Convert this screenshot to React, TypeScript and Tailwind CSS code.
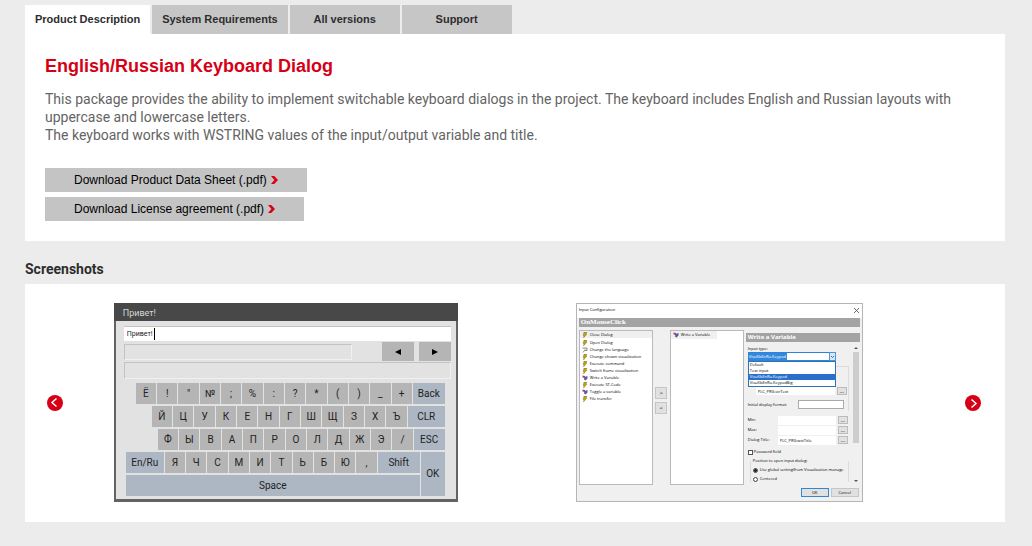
import { useState, type ReactNode } from "react";
import clsx from "clsx";

const TABS = ["Product Description", "System Requirements", "All versions", "Support"];

const DOWNLOADS = [
  "Download Product Data Sheet (.pdf)",
  "Download License agreement (.pdf)",
];

const ACTIONS: { label: string; icon: ActionKind }[] = [
  { label: "Close Dialog", icon: "bolt" },
  { label: "Open Dialog", icon: "bolt" },
  { label: "Change the language", icon: "flag" },
  { label: "Change shown visualization", icon: "bolt" },
  { label: "Execute command", icon: "bolt" },
  { label: "Switch frame visualization", icon: "bolt" },
  { label: "Write a Variable", icon: "variable" },
  { label: "Execute ST-Code", icon: "bolt" },
  { label: "Toggle a variable", icon: "variable" },
  { label: "File transfer", icon: "bolt" },
];

const INPUT_TYPES = ["Default", "Text input", "VisuKbEnRu.Keypad", "VisuKbEnRu.KeypadBig"];

type ActionKind = "bolt" | "flag" | "variable";

function ActionIcon({ kind }: { kind: ActionKind }) {
  if (kind === "flag") {
    return (
      <svg className="h-[6px] w-[6px] shrink-0" viewBox="0 0 12 12" fill="none">
        <path d="M1 2h9v5H5L2 11" stroke="#666" strokeWidth="1.5" />
        <path d="M4 4.5h4" stroke="#999" />
      </svg>
    );
  }
  if (kind === "variable") {
    return (
      <svg className="h-[6px] w-[6px] shrink-0" viewBox="0 0 12 12">
        <path d="M1 1l5 1v4L1 5z" fill="#c23a4a" />
        <path d="M5 4l6-2v5l-4 4-3-2z" fill="#4a5fa8" />
      </svg>
    );
  }
  return (
    <svg className="h-[6px] w-[6px] shrink-0" viewBox="0 0 12 12">
      <path d="M4 0h6L8 4h2L3 12l1-5H2z" fill="#b8a513" stroke="#5e5510" strokeWidth="0.6" />
    </svg>
  );
}

function RedChevron() {
  return (
    <svg className="h-2 w-[7px]" viewBox="0 0 7 8">
      <path d="M0 0h3.2L7 4 3.2 8H0l3.4-4z" fill="#d90012" />
    </svg>
  );
}

function SlideButton({ direction }: { direction: "prev" | "next" }) {
  return (
    <button
      type="button"
      aria-label={direction === "prev" ? "Previous" : "Next"}
      className="size-4 shrink-0 rounded-full"
    >
      <svg className={clsx("size-4", direction === "prev" && "rotate-180")} viewBox="0 0 16 16">
        <circle cx="8" cy="8" r="8" fill="#d60016" />
        <path d="M6.5 4.5L11 8.5l-4.5 4" fill="none" stroke="#fff" strokeWidth="1.5" />
      </svg>
    </button>
  );
}

function Key({ children, className }: { children: ReactNode; className?: string }) {
  return (
    <button
      type="button"
      className={clsx(
        "flex min-w-0 items-center justify-center text-[10px] leading-none text-[#222]",
        className ?? "flex-1 bg-[#b5b5b5]",
      )}
    >
      {children}
    </button>
  );
}

function Keys({ chars }: { chars: string }) {
  return (
    <>
      {chars.split(" ").map((c) => (
        <Key key={c}>{c}</Key>
      ))}
    </>
  );
}

function KeyboardDialog() {
  return (
    <div className="flex w-[344px] flex-col border-b-[3px] border-l-2 border-r-2 border-[#636363] bg-[#e2e2e2] font-['Roboto',sans-serif]">
      <div className="-mx-0.5 h-[18px] bg-[#484848] pl-[9px] text-[9px] leading-5 text-[#d5d5d5]">
        Привет!
      </div>
      <div className="pl-2 pr-[5px] pt-[5px]">
        <div className="flex h-[15px] items-center border-t border-[#c4c4bb] bg-white pl-[3px] text-[#222]">
          <input
            aria-label="Привет!"
            defaultValue="Привет!"
            className="h-3 w-7 border-r border-black bg-transparent p-0 text-[7px] leading-3"
          />
        </div>
        <div className="mt-px flex h-[19px] items-center gap-[5px]">
          <div className="h-4 w-[228px] border border-b-[#f0f0f0] border-l-[#c4c4bb] border-r-[#f0f0f0] border-t-[#c4c4bb]" />
          <button type="button" aria-label="Left" className="ml-auto flex h-full w-8 items-center justify-center bg-[#b5b5b5]">
            <svg className="h-1.5 w-1.5" viewBox="0 0 6 6"><path d="M6 0v6L0 3z" /></svg>
          </button>
          <button type="button" aria-label="Right" className="flex h-full w-8 items-center justify-center bg-[#b5b5b5]">
            <svg className="h-1.5 w-1.5" viewBox="0 0 6 6"><path d="M0 0v6l6-3z" /></svg>
          </button>
        </div>
        <div className="mt-px h-[17px] border border-b-[#f0f0f0] border-l-[#c4c4bb] border-r-[#f0f0f0] border-t-[#c4c4bb]" />
      </div>
      <div className="flex flex-col gap-0.5 pb-[3px] pl-2.5 pr-[11px] pt-1">
        <div className="flex h-[21px] gap-px pl-2.5">
          <Keys chars={'Ё ! " № ; % : ? * ( ) _ +'} />
          <Key className="w-8 bg-[#adb7c4]">Back</Key>
        </div>
        <div className="flex h-[21px] gap-px pl-[26px]">
          <Keys chars="Й Ц У К Е Н Г Ш Щ З Х Ъ" />
          <Key className="w-[37px] bg-[#adb7c4]">CLR</Key>
        </div>
        <div className="flex h-[21px] gap-px pl-8">
          <Keys chars="Ф Ы В А П Р О Л Д Ж Э /" />
          <Key className="w-[31px] bg-[#adb7c4]">ESC</Key>
        </div>
        <div className="flex gap-px">
          <div className="flex flex-1 flex-col gap-0.5">
            <div className="flex h-[21px] gap-px">
              <Key className="w-[38px] bg-[#adb7c4]">En/Ru</Key>
              <Keys chars="Я Ч С М И Т Ь Б Ю ," />
              <Key className="w-[42px] bg-[#adb7c4]">Shift</Key>
            </div>
            <div className="flex h-[21px]">
              <Key className="flex-1 bg-[#adb7c4]">Space</Key>
            </div>
          </div>
          <Key className="w-6 bg-[#adb7c4]">OK</Key>
        </div>
      </div>
    </div>
  );
}

function MoreButton() {
  return (
    <button type="button" className="ml-0.5 h-2 w-2.5 border border-[#bbb] bg-[#e1e1e1] text-[6px] leading-[4px]">
      ...
    </button>
  );
}

function FieldRow({ id, label, value }: { id: string; label: string; value?: string }) {
  return (
    <div className="flex h-2.5 items-center">
      <label htmlFor={id} className="w-[30px]">{label}</label>
      <input id={id} defaultValue={value} className="h-[9px] w-[58px] bg-white px-0.5 py-0" />
      <MoreButton />
    </div>
  );
}

function InputConfigDialog() {
  const [mode, setMode] = useState("global");

  return (
    <div className="w-[287px] border border-[#b5b5b5] bg-[#f0f0f0] font-['Open_Sans',sans-serif] text-[4px] leading-[6px] font-medium text-black">
      <div className="flex h-3.5 items-center justify-between bg-white pb-0.5 pl-0.5 pr-[3px]">
        <span>Input Configuration</span>
        <button type="button" aria-label="Close">
          <svg className="size-[5px]" viewBox="0 0 5 5"><path d="M0 0l5 5M5 0L0 5" stroke="#444" strokeWidth="0.8" /></svg>
        </button>
      </div>
      <div className="mx-0.5 h-[9px] bg-[#a3a3a3] pl-0.5 font-['Liberation_Serif',serif] text-[7px] font-bold leading-[9px] text-white">
        OnMouseClick
      </div>
      <div className="mx-0.5 mt-[3px] flex h-[155px]">
        <ul className="w-[74px] border border-[#b9b9c0] bg-white">
          {ACTIONS.map((a, i) => (
            <li key={a.label} className={clsx("flex h-[7px] items-center gap-0.5 pl-0.5", i === 0 && "mb-px h-2 bg-[#f0f0f0]")}>
              <ActionIcon kind={a.icon} />
              <span>{a.label}</span>
            </li>
          ))}
        </ul>
        <div className="flex w-[17px] flex-col items-center gap-[3px] pt-[57px]">
          <button type="button" className="size-3 shrink-0 border border-[#c6c6c6] bg-[#e1e1e1] text-[6px]">&gt;</button>
          <button type="button" className="size-3 shrink-0 border border-[#c6c6c6] bg-[#e1e1e1] text-[6px]">&lt;</button>
        </div>
        <ul className="w-[74px] border border-[#b9b9c0] bg-white">
          <li className="flex h-2 w-[46px] items-center gap-0.5 bg-[#f0f0f0] pl-0.5">
            <ActionIcon kind="variable" />
            <span>Write a Variable</span>
          </li>
        </ul>

        <div className="ml-0.5 flex flex-1 flex-col pt-[3px]">
          <div className="h-[9px] shrink-0 bg-[#a3a3a3] pl-0.5 text-[6px] font-bold leading-[9px] text-white">
            Write a Variable
          </div>
          <div className="mt-0.5 flex flex-1 justify-between">
            <div className="w-[103px] pl-0.5 pt-0.5">
              <label htmlFor="input-type" className="block h-[6px]">Input type:</label>
              <div className="relative">
                <select
                  id="input-type"
                  defaultValue="VisuKbEnRu.Keypad"
                  className="block h-[9px] w-[88px] appearance-none border border-[#2f83d6] bg-[linear-gradient(to_right,#3388dd_38px,#ffffff_38px)] p-0 text-white"
                >
                  {INPUT_TYPES.map((t) => <option key={t}>{t}</option>)}
                </select>
                <svg className="absolute left-[81px] top-0 h-[9px] w-[7px]" viewBox="0 0 7 9">
                  <path d="M0.5 0.5h6v8h-6z" fill="#d5e9f8" stroke="#4c94d8" />
                  <path d="M2 4l1.5 1.5L5 4" fill="none" stroke="#333" strokeWidth="0.7" />
                </svg>
                <ul className="absolute left-0 top-[9px] z-10 w-[88px] border border-[#2f72b5] bg-white">
                  {INPUT_TYPES.map((t) => (
                    <li key={t} className={clsx("h-[6px] pl-px", t === "VisuKbEnRu.Keypad" && "bg-[#2a6fcb] text-white")}>
                      {t}
                    </li>
                  ))}
                </ul>
              </div>
              <div className="mt-[5px] h-[45px] border-r border-t border-[#dcdcdc]">
                <div className="flex items-center pl-2 pt-5">
                  <input aria-label="Variable" defaultValue="PLC_PRG.strText" className="h-2 w-[79px] bg-white px-0.5 py-0" />
                  <MoreButton />
                </div>
                <div className="mt-[5px] flex items-center">
                  <label htmlFor="format" className="w-[50px]">Initial display format:</label>
                  <input id="format" className="h-[9px] w-[46px] border border-[#aaa] bg-white p-0" />
                </div>
              </div>
              <div className="mt-1">
                <FieldRow id="min" label="Min:" />
                <FieldRow id="max" label="Max:" />
                <FieldRow id="title" label="Dialog Title:" value="PLC_PRG.wstTitle" />
              </div>
              <label className="mt-1 flex h-[6px] items-center gap-px">
                <input type="checkbox" className="size-[5px] appearance-none border border-[#555] bg-white" />
                Password field
              </label>
              <fieldset className="ml-0.5 mt-[3px] border-x border-[#dcdcdc] pl-0.5">
                <legend className="h-[6px]">Position to open input dialog:</legend>
                <label className="mt-[3px] flex h-[6px] items-center gap-0.5 whitespace-nowrap">
                  <input
                    type="radio"
                    name="position"
                    checked={mode === "global"}
                    onChange={() => setMode("global")}
                    className="size-[5px] shrink-0 appearance-none rounded-full border border-[#444] bg-white checked:bg-[radial-gradient(#222_1px,#fff_2px)]"
                  />
                  Use global setting(from Visualization manage
                </label>
                <label className="mt-[3px] flex h-[6px] items-center gap-0.5">
                  <input
                    type="radio"
                    name="position"
                    checked={mode === "centered"}
                    onChange={() => setMode("centered")}
                    className="size-[5px] appearance-none rounded-full border border-[#444] bg-white checked:bg-[radial-gradient(#222_1px,#fff_2px)]"
                  />
                  Centered
                </label>
              </fieldset>
            </div>
            <div className="mr-px flex w-[6px] flex-col items-center justify-between py-0.5">
              <svg className="h-1 w-1" viewBox="0 0 4 4"><path d="M0 3l2-2 2 2z" fill="#555" /></svg>
              <div className="mb-auto mt-0.5 h-[91px] w-full bg-[#cdcdcd]" />
              <svg className="h-1 w-1" viewBox="0 0 4 4"><path d="M0 1l2 2 2-2z" fill="#555" /></svg>
            </div>
          </div>
        </div>
      </div>
      <div className="mb-1 mr-[3px] mt-[3px] flex justify-end gap-0.5">
        <button type="button" className="h-[9px] w-7 border border-[#3187d6] bg-[#e1e1e1] leading-none">OK</button>
        <button type="button" className="h-[9px] w-7 border border-[#c6c6c6] bg-[#e1e1e1] leading-none">Cancel</button>
      </div>
    </div>
  );
}

export default function App() {
  const [tab, setTab] = useState(TABS[0]);

  return (
    <div className="min-h-screen bg-[#ececec] pb-6 pl-[25px] pr-[27px] pt-[5px] font-['Liberation_Sans',Arial,sans-serif]">
      <nav className="flex gap-0.5">
        {TABS.map((t) => (
          <button
            key={t}
            type="button"
            onClick={() => setTab(t)}
            className={clsx(
              "h-[29px] min-w-[110px] px-2.5 text-[11px] font-bold text-[#2d2d2d]",
              t === tab ? "bg-white" : "bg-[#c6c6c6]",
            )}
          >
            {t}
          </button>
        ))}
      </nav>

      <section className="bg-white px-5 pb-5 pt-5">
        <h1 className="text-lg leading-6 font-bold text-[#d60016]">English/Russian Keyboard Dialog</h1>
        <p className="mt-3 font-['Roboto',sans-serif] text-sm leading-[18px] text-[#646464]">
          This package provides the ability to implement switchable keyboard dialogs in the project. The
          keyboard includes English and Russian layouts with uppercase and lowercase letters.
          <br />
          The keyboard works with WSTRING values of the input/output variable and title.
        </p>
        <div className="mt-6 flex flex-col items-start gap-[5px]">
          {DOWNLOADS.map((d) => (
            <a key={d} href="#" className="flex h-6 items-center gap-1 bg-[#c4c4c4] pl-[29px] pr-[29px] text-xs text-black">
              {d}
              <RedChevron />
            </a>
          ))}
        </div>
      </section>

      <h2 className="mt-[18px] font-['Roboto',sans-serif] text-sm leading-5 font-bold text-[#2d2d2d]">
        Screenshots
      </h2>
      <section className="mt-[5px] flex items-center bg-white pb-5 pl-[22px] pr-6 pt-[19px]">
        <SlideButton direction="prev" />
        <div className="ml-1.5 mr-[29px] grid flex-1 grid-cols-2 items-start justify-items-center">
          <KeyboardDialog />
          <InputConfigDialog />
        </div>
        <SlideButton direction="next" />
      </section>
    </div>
  );
}
